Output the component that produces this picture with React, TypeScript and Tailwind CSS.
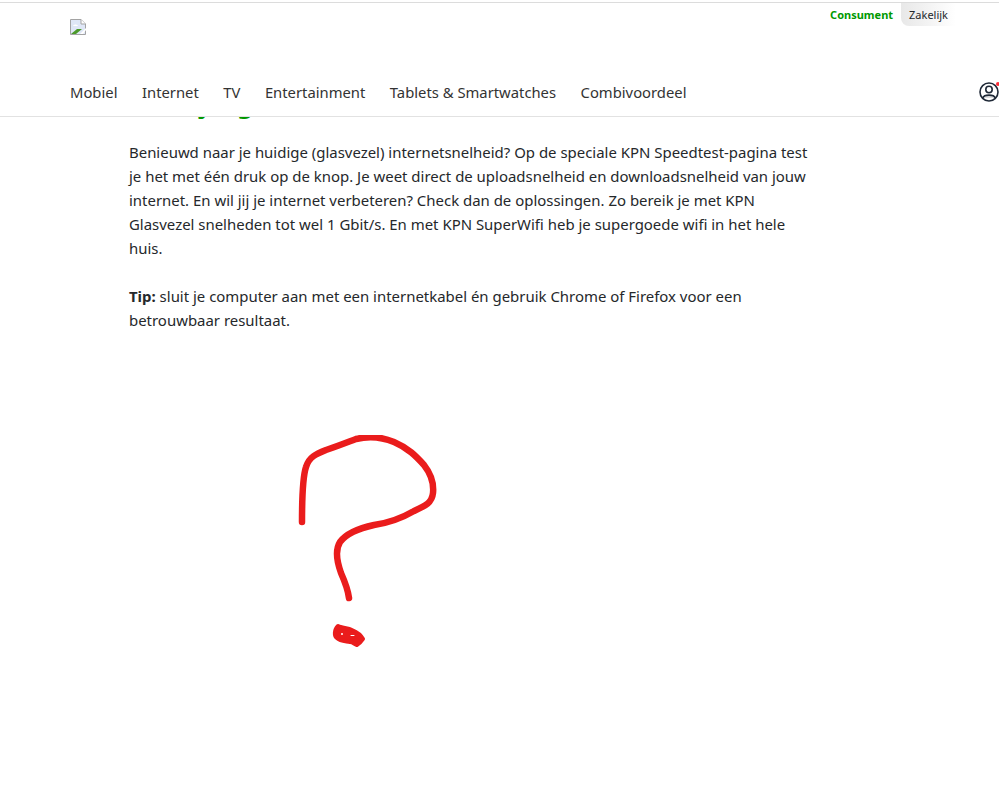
const navItems = ["Mobiel", "Internet", "TV", "Entertainment", "Tablets & Smartwatches", "Combivoordeel"];

function BrokenImage() {
  return (
    <svg width="16" height="16" viewBox="0 0 16 16" className="block">
      <path d="M0.5 0.5H11L15.5 5V15.5H0.5Z" fill="#dfe7f7" stroke="#a3a3a3" />
      <path d="M11 0.5V5H15.5" fill="#fff" stroke="#a3a3a3" />
      <path d="M3 7C4 5 7 5 8 7Z" fill="#fff" />
      <path d="M1 15L7 10L12 10L6 15Z" fill="#4c9a2a" />
      <path d="M10 15L16 9V11L13 15Z" fill="#fff" />
    </svg>
  );
}

function UserIcon() {
  return (
    <div className="relative w-5 h-5 shrink-0">
      <svg width="20" height="20" viewBox="0 0 20 20" fill="none" stroke="#1f2937" strokeWidth="1.6">
        <circle cx="10" cy="10" r="9" />
        <circle cx="10" cy="7.5" r="3.2" />
        <path d="M3.8 16C5 12.2 15 12.2 16.2 16" fill="#1f2937" fillOpacity="0.15" />
      </svg>
      <span className="absolute top-0 -right-px w-1 h-1 rounded-full bg-red-500" />
    </div>
  );
}

function QuestionMark() {
  return (
    <svg width="160" height="225" viewBox="0 0 160 225" fill="none" stroke="#ea1c1c" strokeLinecap="round" strokeLinejoin="round" className="block">
      <path
        d="M6 87C6 70 6 44 10 32C13 22 20 19 30 15C42 11 52 7 60 4C72 1 86 2 98 7C112 13 120 21 128 30C135 39 138 48 137 58C136 68 129 71 118 76C106 83 92 88 78 90C64 93 50 99 44 107C39 115 41 127 45 138C49 147 52 155 53 163"
        strokeWidth="6.5"
      />
      <path d="M42 191C45 193 52 193 56 195C61 197 65 200 67 204C65 207 63 209 61 210C58 209 57 207 54 207C49 206 44 206 41 203C38 201 38 195 42 191Z" fill="#ea1c1c" stroke="#ea1c1c" strokeWidth="4" />
      <circle cx="46" cy="199" r="1" fill="#fff" stroke="none" />
      <path d="M55 200.5H58" stroke="#fff" strokeWidth="1" />
    </svg>
  );
}

export default function App() {
  return (
    <div className="min-h-[796px] bg-white text-[#25282b] font-['Noto_Sans','Open_Sans',sans-serif]">
      <header className="sticky top-0 z-10 h-[117px] bg-white border-b border-[#e2e2e2]">
        <div className="h-[3px] pt-[2px]">
          <div className="h-px bg-[#dcdcdc]" />
        </div>
        <div className="flex justify-end items-start pr-[43px] h-[23px] text-[11px] leading-[23px]">
          <span className="font-bold text-[#009900] pr-2">Consument</span>
          <span className="px-2 bg-gradient-to-r from-[#e8e8e8] to-white rounded-bl-lg">Zakelijk</span>
        </div>
        <div className="pl-[70px] -mt-[7px] h-[61px]">
          <BrokenImage />
        </div>
        <nav className="flex items-center pl-[70px] gap-[24.5px] text-[14.8px] leading-6 text-[#333]">
          {navItems.map((item) => (
            <a key={item} href="#" className="whitespace-nowrap">
              {item}
            </a>
          ))}
          <div className="ml-auto">
            <UserIcon />
          </div>
        </nav>
      </header>
      <main className="pl-[129px] w-[820px]">
        <h2 className="-mt-[30px] text-[25px] leading-[32px] font-bold text-[#009900] whitespace-nowrap">
          Meet je (glasvezel) snelheid
        </h2>
        <div className="pt-[21px] text-[14.94px] leading-6">
          <p>
            Benieuwd naar je huidige (glasvezel) internetsnelheid? Op de speciale KPN Speedtest-pagina test je het met één druk op de knop. Je weet direct de uploadsnelheid en downloadsnelheid van jouw internet. En wil jij je internet verbeteren? Check dan de oplossingen. Zo bereik je met KPN Glasvezel snelheden tot wel 1 Gbit/s. En met KPN SuperWifi heb je supergoede wifi in het hele huis.
          </p>
          <p className="mt-6">
            <strong>Tip:</strong> sluit je computer aan met een internetkabel én gebruik Chrome of Firefox voor een betrouwbaar resultaat.
          </p>
        </div>
        <div className="ml-[167px] mt-[103px]">
          <QuestionMark />
        </div>
      </main>
    </div>
  );
}
